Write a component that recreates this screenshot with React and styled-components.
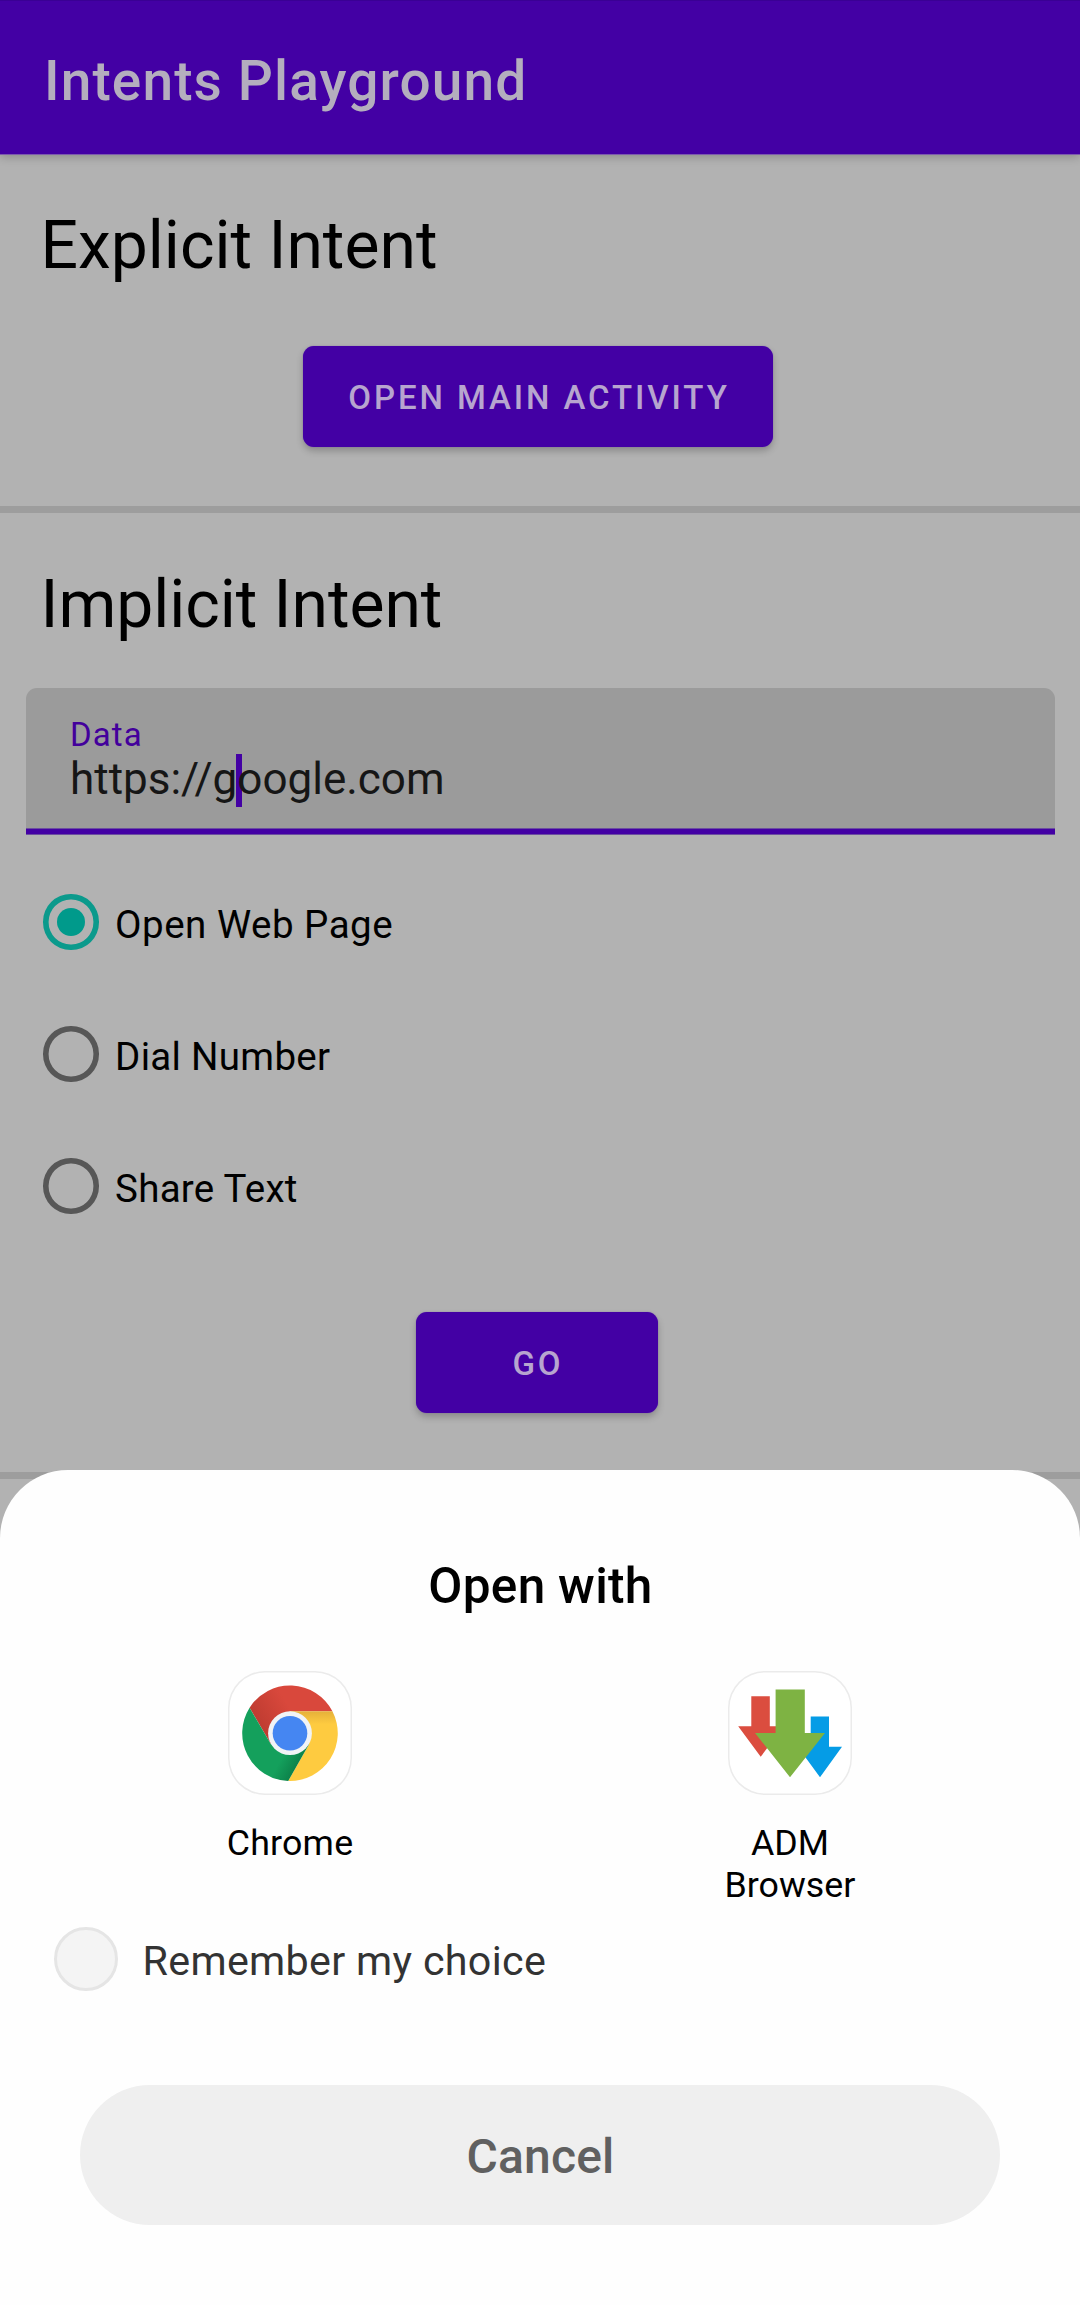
import React, { useState } from "react";
import styled, { createGlobalStyle } from "styled-components";

const GlobalStyle = createGlobalStyle`
  *, *::before, *::after { box-sizing: border-box; }
  body { margin: 0; background: #b2b2b2; }
  button { font: inherit; border: 0; margin: 0; cursor: pointer; }
`;

const Screen = styled.div`
  position: relative;
  width: 1080px;
  height: 2305px;
  overflow: hidden;
  background: #b2b2b2;
  color: #000;
  font-family: Roboto, "Noto Sans", sans-serif;
`;

const AppBar = styled.header`
  height: 154px;
  padding: 47.5px 0 0 44px;
  border-top: 1px solid #3a0094;
  background: #4300a4;
  box-shadow: 0 1px 0 #7d5aad, 0 3px 9px rgba(0, 0, 0, 0.22);
`;

const AppTitle = styled.h1`
  margin: 0;
  font-size: 55px;
  line-height: 64px;
  font-weight: 500;
  letter-spacing: 1.12px;
  color: #b4aebe;
`;

const Section = styled.section`
  display: flex;
  flex-direction: column;
  height: ${(p) => p.$height}px;
  padding: ${(p) => p.$top}px 25px 0 26px;
`;

const Heading = styled.h2`
  margin: 0 0 ${(p) => p.$gap}px 14.5px;
  font-size: 66px;
  line-height: 77px;
  font-weight: 400;
  letter-spacing: ${(p) => p.$tracking || 0}px;
`;

const Divider = styled.hr`
  height: 7px;
  margin: 0;
  border: 0;
  background: #9d9d9d;
`;

const Actions = styled.div`
  display: flex;
  justify-content: center;
  padding-right: ${(p) => p.$shift}px;
`;

const ContainedButton = styled.button`
  && {
    display: flex;
    justify-content: center;
    width: ${(p) => p.$width}px;
    height: 100.5px;
    padding: 32.4px 0 0 2px;
    border-radius: 11px;
    background: #4300a4;
    box-shadow: 0 0 1px #6f45ad, 0 4px 7px rgba(0, 0, 0, 0.22);
    color: #b7a5cf;
    font-size: 33px;
    line-height: 39px;
    font-weight: 500;
    letter-spacing: 2.92px;
  }
`;

const Field = styled.label`
  display: flex;
  flex-direction: column;
  justify-content: space-between;
  height: 147px;
  padding-top: 28px;
  border-radius: 11px 11px 0 0;
  background: #9b9b9b;
`;

const FieldBody = styled.div`
  padding-left: 44px;
`;

const FieldLabel = styled.div`
  font-size: 33px;
  line-height: 38px;
  letter-spacing: 1.1px;
  color: #43009c;
`;

const FieldValue = styled.div`
  position: relative;
  z-index: 0;
  margin-top: -1px;
  font-size: 44px;
  line-height: 52px;
  color: #161616;
`;

const Caret = styled.span`
  position: absolute;
  z-index: -1;
  left: 166px;
  top: 1px;
  width: 6px;
  height: 53px;
  background: #4300a4;
`;

const Underline = styled.div`
  height: 7px;
  border-top: 1px solid #6c4da0;
  border-bottom: 1px solid #6c4da0;
  background: #4300a4;
`;

const RadioGroup = styled.div`
  margin: 21px 0 60px;
`;

const RadioRow = styled.div`
  display: flex;
  align-items: center;
  gap: 16.5px;
  height: 132px;
  padding-left: 17.2px;
`;

const RadioMark = styled.span`
  display: grid;
  place-items: center;
  width: 55.4px;
  height: 55.4px;
  border-radius: 50%;
  box-shadow: inset 0 0 0 5.6px ${(p) => (p.$on ? "#0b9a8c" : "#575757")};

  &::after {
    content: "";
    width: 28px;
    height: 28px;
    border-radius: 50%;
    background: ${(p) => (p.$on ? "#009a8b" : "transparent")};
  }
`;

const RadioText = styled.span`
  padding-top: 4px;
  font-size: 38.5px;
  line-height: 45px;
  letter-spacing: ${(p) => p.$tracking}px;
`;

const Sheet = styled.div`
  position: absolute;
  left: 0;
  right: 0;
  bottom: 0;
  height: 835px;
  padding-top: 87px;
  border-radius: 68px 68px 0 0;
  background: #fefefe;
`;

const SheetTitle = styled.h3`
  margin: 0 0 56px;
  padding-left: 1px;
  text-align: center;
  font-size: 49.5px;
  line-height: 58px;
  font-weight: 500;
  letter-spacing: 0.3px;
`;

const AppGrid = styled.div`
  display: grid;
  grid-template-columns: 500px 500px;
  justify-content: center;
`;

const AppItem = styled.div`
  display: flex;
  flex-direction: column;
  align-items: center;
  gap: 27px;
`;

const Tile = styled.div`
  display: flex;
  width: 124px;
  height: 124px;
  border-radius: 37px;
  background: #fff;
  box-shadow: inset 0 0 0 1.5px #ebebeb;
`;

const AppName = styled.div`
  width: 150px;
  text-align: center;
  font-size: 35.75px;
  line-height: 42px;
  letter-spacing: ${(p) => p.$tracking || 0}px;
`;

const Remember = styled.div`
  display: flex;
  align-items: center;
  gap: 24.5px;
  margin: 21px 0 94px;
  padding-left: 54px;
`;

const RememberMark = styled.span`
  width: 64px;
  height: 64px;
  border: 3px solid #e5e5e5;
  border-radius: 50%;
  background: #f4f4f4;
`;

const RememberText = styled.span`
  padding-top: 4px;
  font-size: 41.25px;
  line-height: 48px;
  letter-spacing: 0.31px;
  color: #333;
`;

const CancelButton = styled.button`
  && {
    display: block;
    width: 920px;
    height: 140px;
    margin: 0 auto;
    padding: 2px 0 0 1px;
    border-radius: 70px;
    background: #efefef;
    color: #606060;
    font-size: 48px;
    line-height: 57px;
    font-weight: 500;
    letter-spacing: 0.2px;
  }
`;

const ChromeIcon = () => (
  <svg width="124" height="124" viewBox="-62 -62.2 124 124">
    <defs>
      <linearGradient id="redShade" gradientUnits="userSpaceOnUse" x1="-30" y1="-7" x2="0" y2="-25">
        <stop offset="0" stopColor="#bf3c31" />
        <stop offset="1" stopColor="#d9483c" />
      </linearGradient>
      <linearGradient id="yellowShade" gradientUnits="userSpaceOnUse" x1="0" y1="-22" x2="0" y2="-9">
        <stop offset="0" stopColor="#e5b03a" />
        <stop offset="1" stopColor="#fecb40" />
      </linearGradient>
      <linearGradient id="greenShade" gradientUnits="userSpaceOnUse" x1="10" y1="30" x2="-6" y2="21">
        <stop offset="0" stopColor="#0c8049" />
        <stop offset="1" stopColor="#14a05c" />
      </linearGradient>
    </defs>
    <path d="M-40.4-25.5A47.8 47.8 0 0 1 42.4-22L0-22L-19.05 11Z" fill="url(#redShade)" />
    <path d="M42.4-22A47.8 47.8 0 0 1-1.8 47.8L19.05 11L0-22Z" fill="url(#yellowShade)" />
    <path d="M-1.8 47.8A47.8 47.8 0 0 1-40.4-25.5L-19.05 11L19.05 11Z" fill="url(#greenShade)" />
    <circle r="21.9" fill="#f1f3f6" />
    <circle r="17.3" fill="#4586f2" />
  </svg>
);

const AdmIcon = () => (
  <svg width="124" height="124" viewBox="0 0 124 124">
    <path d="M23.3 25.2H41.8V55.3H55.5L32.7 85.8L10.2 55.3H23.3Z" fill="#db4d3f" />
    <path d="M82.7 45.6H101V75.7H114L92 106.2L69.7 75.7H82.7Z" fill="#059ce6" />
    <path d="M47.6 18.4H76.8V62H97L62 106.3L27 62H47.6Z" fill="#7eb343" />
  </svg>
);

const options = [
  { name: "Open Web Page", tracking: 0.5 },
  { name: "Dial Number", tracking: 0.3 },
  { name: "Share Text", tracking: 0.25 },
];

export default function App() {
  const [selected, setSelected] = useState("Open Web Page");

  return (
    <>
      <GlobalStyle />
      <Screen>
        <AppBar>
          <AppTitle>Intents Playground</AppTitle>
        </AppBar>

        <Section $height={352} $top={53}>
          <Heading $gap={62}>Explicit Intent</Heading>
          <Actions $shift={5}>
            <ContainedButton $width={470}>OPEN MAIN ACTIVITY</ContainedButton>
          </Actions>
        </Section>
        <Divider />

        <Section $height={959} $top={52.5}>
          <Heading $gap={45.5} $tracking={-0.05}>Implicit Intent</Heading>
          <Field>
            <FieldBody>
              <FieldLabel>Data</FieldLabel>
              <FieldValue>
                https://google.com
                <Caret />
              </FieldValue>
            </FieldBody>
            <Underline />
          </Field>
          <RadioGroup>
            {options.map((o) => (
              <RadioRow key={o.name} onClick={() => setSelected(o.name)}>
                <RadioMark $on={selected === o.name} />
                <RadioText $tracking={o.tracking}>{o.name}</RadioText>
              </RadioRow>
            ))}
          </RadioGroup>
          <Actions $shift={7}>
            <ContainedButton $width={242}>GO</ContainedButton>
          </Actions>
        </Section>
        <Divider />

        <Sheet>
          <SheetTitle>Open with</SheetTitle>
          <AppGrid>
            <AppItem>
              <Tile><ChromeIcon /></Tile>
              <AppName $tracking={0.2}>Chrome</AppName>
            </AppItem>
            <AppItem>
              <Tile><AdmIcon /></Tile>
              <AppName>ADM Browser</AppName>
            </AppItem>
          </AppGrid>
          <Remember>
            <RememberMark />
            <RememberText>Remember my choice</RememberText>
          </Remember>
          <CancelButton>Cancel</CancelButton>
        </Sheet>
      </Screen>
    </>
  );
}
